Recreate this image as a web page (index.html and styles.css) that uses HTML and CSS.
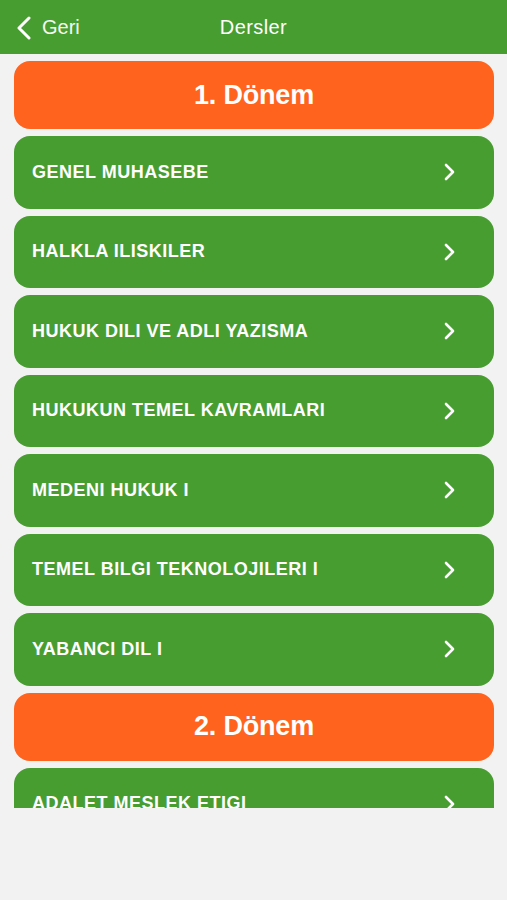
FILE: index.html
```html
<!DOCTYPE html>
<html lang="tr">
<head>
<meta charset="utf-8">
<title>Dersler</title>
<link rel="stylesheet" href="styles.css">
</head>
<body>
<header class="navbar">
  <div class="back">
    <svg class="back-icon" width="16" height="24" viewBox="0 0 16 24"><path d="M13 2 L3 12 L13 22" fill="none" stroke="#fff" stroke-width="3" stroke-linecap="round" stroke-linejoin="round"/></svg>
    <span class="back-label">Geri</span>
  </div>
  <div class="title">Dersler</div>
</header>
<main class="scroll">
  <div class="list">
    <div class="period">1. Dönem</div>
    <div class="course"><span>GENEL MUHASEBE</span><svg class="chev" width="14" height="20" viewBox="0 0 14 20"><path d="M4 3 L11 10 L4 17" fill="none" stroke="#fff" stroke-width="2.6" stroke-linecap="round" stroke-linejoin="round"/></svg></div>
    <div class="course"><span>HALKLA ILISKILER</span><svg class="chev" width="14" height="20" viewBox="0 0 14 20"><path d="M4 3 L11 10 L4 17" fill="none" stroke="#fff" stroke-width="2.6" stroke-linecap="round" stroke-linejoin="round"/></svg></div>
    <div class="course"><span>HUKUK DILI VE ADLI YAZISMA</span><svg class="chev" width="14" height="20" viewBox="0 0 14 20"><path d="M4 3 L11 10 L4 17" fill="none" stroke="#fff" stroke-width="2.6" stroke-linecap="round" stroke-linejoin="round"/></svg></div>
    <div class="course"><span>HUKUKUN TEMEL KAVRAMLARI</span><svg class="chev" width="14" height="20" viewBox="0 0 14 20"><path d="M4 3 L11 10 L4 17" fill="none" stroke="#fff" stroke-width="2.6" stroke-linecap="round" stroke-linejoin="round"/></svg></div>
    <div class="course"><span>MEDENI HUKUK I</span><svg class="chev" width="14" height="20" viewBox="0 0 14 20"><path d="M4 3 L11 10 L4 17" fill="none" stroke="#fff" stroke-width="2.6" stroke-linecap="round" stroke-linejoin="round"/></svg></div>
    <div class="course"><span>TEMEL BILGI TEKNOLOJILERI I</span><svg class="chev" width="14" height="20" viewBox="0 0 14 20"><path d="M4 3 L11 10 L4 17" fill="none" stroke="#fff" stroke-width="2.6" stroke-linecap="round" stroke-linejoin="round"/></svg></div>
    <div class="course"><span>YABANCI DIL I</span><svg class="chev" width="14" height="20" viewBox="0 0 14 20"><path d="M4 3 L11 10 L4 17" fill="none" stroke="#fff" stroke-width="2.6" stroke-linecap="round" stroke-linejoin="round"/></svg></div>
    <div class="period">2. Dönem</div>
    <div class="course"><span>ADALET MESLEK ETIGI</span><svg class="chev" width="14" height="20" viewBox="0 0 14 20"><path d="M4 3 L11 10 L4 17" fill="none" stroke="#fff" stroke-width="2.6" stroke-linecap="round" stroke-linejoin="round"/></svg></div>
  </div>
</main>
</body>
</html>
```
FILE: styles.css
```css
* { box-sizing: border-box; }
html, body {
  margin: 0;
  padding: 0;
  background: #f2f2f2;
  font-family: "Liberation Sans", Arial, sans-serif;
  height: 900px;
  overflow: hidden;
}
.navbar {
  height: 54px;
  background: #489d31;
  position: relative;
  display: flex;
  align-items: center;
  justify-content: center;
  color: #fff;
}
.back {
  position: absolute;
  left: 16px;
  top: 0;
  height: 54px;
  display: flex;
  align-items: center;
  gap: 10px;
}
.back-icon { display: block; margin-top: 1px; }
.back-label {
  font-size: 20px;
  color: #f4f9f2;
}
.title {
  font-size: 20px;
  font-weight: 500;
  letter-spacing: 0.4px;
}
.scroll {
  height: 754px;
  overflow: hidden;
  padding: 7px 13px 0 14px;
}
.list {
  display: flex;
  flex-direction: column;
  gap: 7px;
}
.period {
  height: 68px;
  border-radius: 16px;
  background: #ff631e;
  color: #fff;
  font-weight: 700;
  font-size: 27px;
  letter-spacing: -0.2px;
  display: flex;
  align-items: center;
  justify-content: center;
}
.course {
  height: 72.5px;
  flex-shrink: 0;
  border-radius: 16px;
  background: #489d31;
  color: #fff;
  display: flex;
  align-items: center;
  justify-content: space-between;
  padding: 0 38px 0 18px;
  font-weight: 700;
  font-size: 18px;
  letter-spacing: 0.5px;
}
.chev { display: block; }
```
